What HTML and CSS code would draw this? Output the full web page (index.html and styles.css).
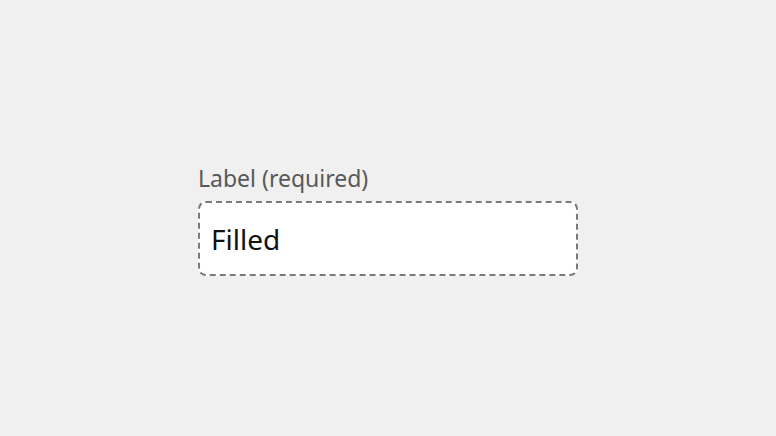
FILE: index.html
```html
<!DOCTYPE html>
<html>
<head>
<meta charset="utf-8">
<link rel="stylesheet" href="styles.css">
</head>
<body>
<main class="page">
  <div class="field">
    <label class="field-label" for="f">Label (required)</label>
    <div class="field-box" id="f">Filled</div>
  </div>
</main>
</body>
</html>
```
FILE: styles.css
```css
html, body { margin: 0; padding: 0; }
body {
  background: #f0f0f0;
  font-family: "Noto Sans", sans-serif;
}
.page {
  box-sizing: border-box;
  width: 776px;
  height: 436px;
  padding-top: 3px;
  display: flex;
  align-items: center;
  justify-content: center;
}
.field {
  display: flex;
  flex-direction: column;
  width: 380px;
  gap: 8px;
}
.field-label {
  font-size: 23px;
  line-height: 30px;
  color: #595959;
}
.field-box {
  box-sizing: border-box;
  height: 75px;
  background: #fff;
  border: 2px dashed #7a7a7a;
  border-radius: 8px;
  padding: 0 11px;
  display: flex;
  align-items: center;
  font-size: 28px;
  color: #111;
}
```
